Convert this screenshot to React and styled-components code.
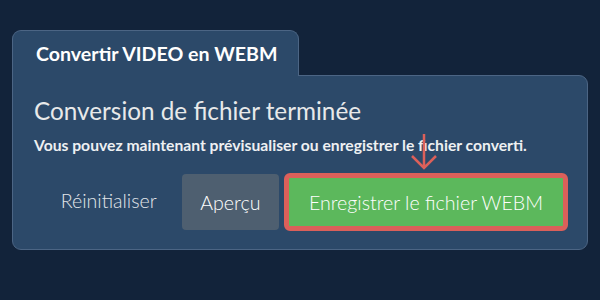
import styled, { createGlobalStyle } from 'styled-components';

const GlobalStyle = createGlobalStyle`
  html, body {
    margin: 0;
    padding: 0;
    background: #12233a;
  }
  body {
    font-family: Lato, "Noto Sans", sans-serif;
    width: 600px;
    height: 300px;
    overflow: hidden;
  }
`;

const Page = styled.div`
  padding: 30px 12px 0 12px;
`;

const Tab = styled.div`
  position: relative;
  z-index: 1;
  width: 287px;
  height: 46px;
  box-sizing: border-box;
  margin-bottom: -1px;
  padding-left: 23px;
  display: flex;
  align-items: center;
  background: #2c4969;
  border: 1px solid #4c6584;
  border-bottom: none;
  border-radius: 9px 9px 0 0;
  color: #ffffff;
  font-size: 19.6px;
  font-weight: 700;
`;

const Panel = styled.div`
  width: 576px;
  height: 175px;
  box-sizing: border-box;
  padding: 20px 19px 0 21px;
  background: #2c4969;
  border: 1px solid #4c6584;
  border-radius: 0 9px 9px 9px;
`;

const Heading = styled.h2`
  margin: 0;
  font-size: 24.3px;
  font-weight: 400;
  line-height: 30px;
  color: #e8e9ea;
`;

const Message = styled.p`
  margin: 9px 0 0 0;
  font-size: 15.7px;
  font-weight: 700;
  line-height: 20px;
  color: #eef0f2;
`;

const Actions = styled.div`
  display: flex;
  justify-content: flex-end;
  align-items: center;
  gap: 5px;
  margin-top: 18px;
`;

const LinkButton = styled.button`
  height: 56px;
  padding: 0 20px 0 22px;
  background: transparent;
  border: none;
  color: #e3e6ea;
  font-family: inherit;
  font-size: 19.6px;
  font-weight: 300;
  white-space: nowrap;
  margin-top: -4px;
`;

const Button = styled.button`
  flex-shrink: 0;
  height: ${({ $highlight }) => ($highlight ? '58px' : '56px')};
  box-sizing: border-box;
  padding: 0 ${({ $highlight }) => ($highlight ? '20px' : '18.5px')};
  background: ${({ $variant }) => ($variant === 'success' ? '#5cb85c' : '#4e5f70')};
  border: ${({ $highlight }) => ($highlight ? '5px solid #dc605a' : 'none')};
  border-radius: ${({ $highlight }) => ($highlight ? '6px' : '4px')};
  color: #ffffff;
  font-family: inherit;
  font-size: 19.6px;
  font-weight: 300;
  white-space: nowrap;
`;

const Highlight = styled.div`
  position: relative;
  display: flex;
`;

const Arrow = styled.svg`
  position: absolute;
  left: 50%;
  bottom: 100%;
  margin-left: -17px;
  margin-bottom: 2px;
`;

const App = () => (
  <Page>
    <GlobalStyle />
    <Tab>Convertir VIDEO en WEBM</Tab>
    <Panel>
      <Heading>Conversion de fichier terminée</Heading>
      <Message>Vous pouvez maintenant prévisualiser ou enregistrer le fichier converti.</Message>
      <Actions>
        <LinkButton>Réinitialiser</LinkButton>
        <Button>Aperçu</Button>
        <Highlight>
          <Arrow width="30" height="38" viewBox="0 0 30 38">
            <path d="M15 1 V35 M3 23 L15 35 L27 23" fill="none" stroke="#dc605a" strokeWidth="2.5" />
          </Arrow>
          <Button $variant="success" $highlight>
            Enregistrer le fichier WEBM
          </Button>
        </Highlight>
      </Actions>
    </Panel>
  </Page>
);

export default App;
